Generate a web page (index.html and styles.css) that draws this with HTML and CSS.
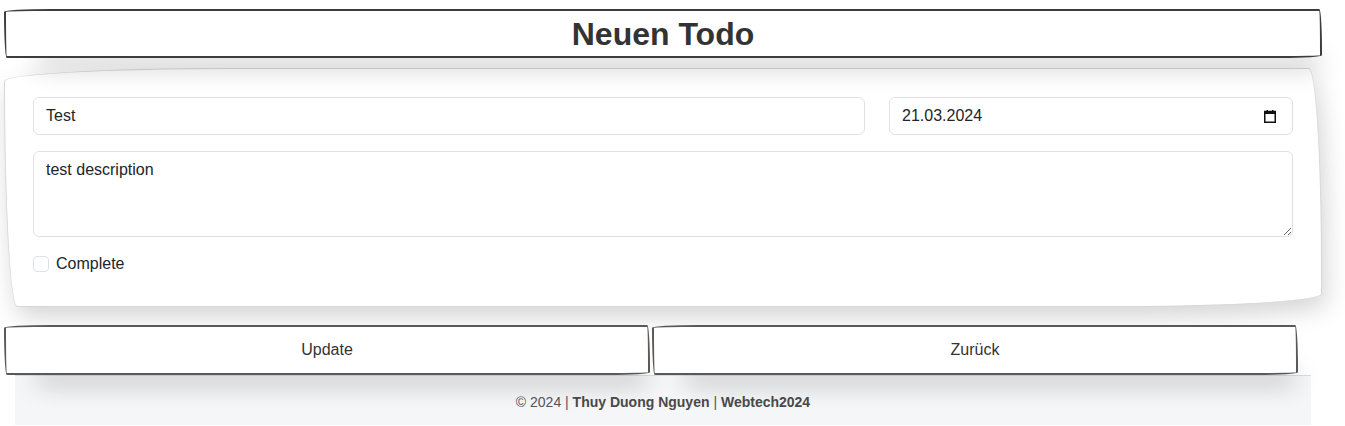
FILE: index.html
```html
<!DOCTYPE html>
<html lang="de">
<head>
<meta charset="utf-8">
<title>Neuen Todo</title>
<link rel="stylesheet" href="styles.css">
</head>
<body>
<div class="page">
  <header class="title-box">
    <h1 class="title">Neuen Todo</h1>
  </header>
  <section class="card">
    <div class="row">
      <div class="field field-title">
        <input class="control" type="text" value="Test">
      </div>
      <div class="field field-date">
        <div class="control date-control">
          <span class="date-value">21.03.2024</span>
          <svg class="cal-icon" width="12" height="13" viewBox="0 0 12 13">
            <rect x="0.75" y="1.5" width="10.5" height="10.75" fill="none" stroke="#111" stroke-width="1.5"/>
            <rect x="0" y="1" width="12" height="3" fill="#111"/>
            <rect x="2.5" y="0" width="1.5" height="2" fill="#111"/>
            <rect x="8" y="0" width="1.5" height="2" fill="#111"/>
          </svg>
        </div>
      </div>
    </div>
    <textarea class="control textarea">test description</textarea>
    <label class="check">
      <span class="box"></span>
      <span class="check-label">Complete</span>
    </label>
  </section>
  <div class="actions">
    <button class="btn" type="button">Update</button>
    <button class="btn" type="button">Zurück</button>
  </div>
  <footer class="footer">
    <span>© 2024 | <b>Thuy Duong Nguyen</b> | <b>Webtech2024</b></span>
  </footer>
</div>
</body>
</html>
```

FILE: styles.css
```css
* { box-sizing: border-box; }

html, body {
  margin: 0;
  padding: 0;
  background: #ffffff;
  overflow: hidden;
}

body {
  font-family: "Liberation Sans", Arial, Helvetica, sans-serif;
  color: #212529;
  font-size: 16px;
}

.page {
  width: 1345px;
  height: 426px;
  padding: 9px 0 0 4px;
  display: flex;
  flex-direction: column;
  align-items: flex-start;
}

.title-box {
  width: 1318px;
  height: 49px;
  border: 2px solid #3e3d3b;
  border-radius: 255px 15px 225px 15px / 15px 225px 15px 255px;
  background: #fff;
  box-shadow: 15px 28px 25px -18px rgba(0, 0, 0, 0.22);
  display: flex;
  align-items: center;
  justify-content: center;
  position: relative;
  z-index: 2;
}

.title {
  margin: 0;
  font-size: 32px;
  font-weight: 700;
  color: #333;
  line-height: 1;
  padding-top: 1px;
}

.card {
  margin-top: 10px;
  width: 1318px;
  height: 239px;
  background: #fff;
  border: 1px solid #d6d6d6;
  border-radius: 255px 15px 225px 15px / 15px 225px 15px 255px;
  box-shadow: 4px 10px 24px 0 rgba(0, 0, 0, 0.17);
  padding: 28px 28px 0 28px;
  display: flex;
  flex-direction: column;
  position: relative;
  z-index: 1;
}

.row {
  display: flex;
  gap: 24px;
}

.field-title { width: 832px; }
.field-date { width: 404px; }

.control {
  display: block;
  width: 100%;
  height: 38px;
  border: 1px solid #dee2e6;
  border-radius: 6px;
  padding: 0 12px;
  font-family: "Liberation Sans", Arial, Helvetica, sans-serif;
  font-size: 16px;
  color: #212529;
  background: #fff;
  outline: none;
}

.date-control {
  display: flex;
  align-items: center;
  justify-content: space-between;
  padding-right: 16px;
}

.cal-icon { display: block; }

.textarea {
  margin-top: 16px;
  width: 1260px;
  height: 86px;
  padding: 6px 12px;
  line-height: 1.5;
  resize: vertical;
}

.check {
  margin-top: 18px;
  display: flex;
  align-items: center;
  gap: 7px;
  font-size: 16px;
  color: #212529;
}

.box {
  width: 16px;
  height: 16px;
  border: 1px solid #dee2e6;
  border-radius: 4px;
  background: #fff;
}

.actions {
  margin-top: 18px;
  display: flex;
  gap: 2px;
  position: relative;
  z-index: 2;
}

.btn {
  width: 646px;
  height: 50px;
  background: #fff;
  border: 2px solid #5a5957;
  border-radius: 255px 15px 225px 15px / 15px 225px 15px 255px;
  box-shadow: 15px 28px 25px -18px rgba(0, 0, 0, 0.22);
  font-family: "Liberation Sans", Arial, Helvetica, sans-serif;
  font-size: 16px;
  color: #333;
  padding: 0;
}

.footer {
  margin-left: 11px;
  width: 1296px;
  height: 50px;
  margin-top: 0;
  background: #f5f6f8;
  border-top: 1px solid #dcdcdc;
  display: flex;
  align-items: center;
  justify-content: center;
  font-size: 14px;
  color: #555;
  padding-top: 3px;
}

.footer b { color: #4a4a4a; }
```
